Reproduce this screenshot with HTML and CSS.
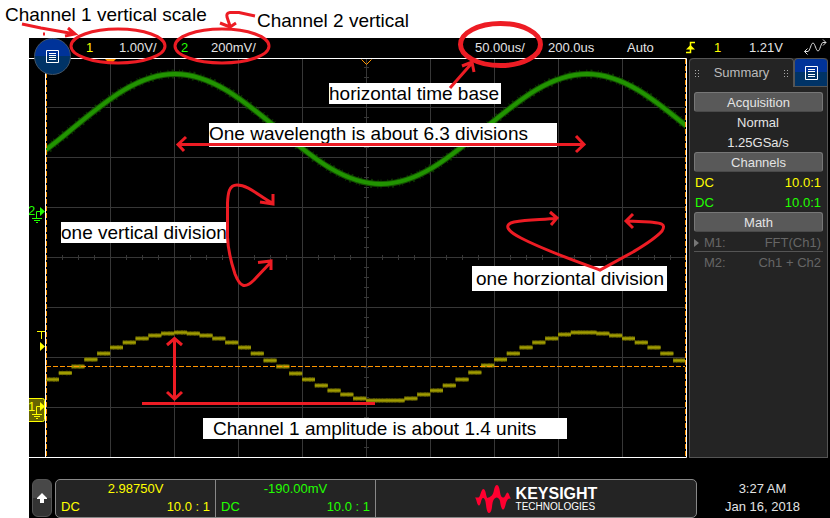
FILE: index.html
```html
<!DOCTYPE html>
<html lang="en">
<head>
<meta charset="utf-8">
<title>Oscilloscope measurement</title>
<link rel="stylesheet" href="styles.css">
</head>
<body>
<div class="page">
  <main class="scope">
    <header class="status">
      <span class="ch1">1</span>
      <span>1.00V/</span>
      <span class="ch2">2</span>
      <span>200mV/</span>
      <span>50.00us/</span>
      <span>200.0us</span>
      <span>Auto</span>
      <svg class="status-icon" width="10" height="20" viewBox="0 0 10 20" fill="none" stroke="#ff0" stroke-width="1.5"><path d="M0 14.500H4.500V4.500H9"/><path d="M0 11.500L4.500 7L9 11.500Z" fill="#ff0" stroke="none"/></svg>
      <span class="ch1">1</span>
      <span>1.21V</span>
      <svg class="status-icon" width="23" height="20" viewBox="0 0 23 20" fill="none" stroke="#ddd"><path d="M0.500 13.500H4C6 13 7 5 9 5S12 13 14 13S17 4.500 19 4.500H22M3.500 10.500L0.500 13.500L3.500 16.500M19 1.500L22 4.500L19 7.500"/></svg>
    </header>

    <div class="workspace">
      <svg class="plot" viewBox="0 0 658 400" role="img" aria-label="Two channel waveform display">
        <g class="grid">
          <path d="M81.500 1V399M145.500 1V399M209.500 1V399M273.500 1V399M337.500 1V399M401.500 1V399M465.500 1V399M529.500 1V399M593.500 1V399"/>
          <path d="M17 49.500H656M17 99.500H656M17 149.500H656M17 199.500H656M17 249.500H656M17 299.500H656M17 349.500H656"/>
          <path class="ticks-x" d="M33 199.500H656"/>
          <path class="ticks-y" d="M337.500 9V399"/>
        </g>
        <svg x="17" y="0" width="639" height="400" viewBox="1 0 639 400">
          <g class="green">
            <path class="fuzz" d="M-76 126C-39 126 -7 99 27 71S93 16 130 16S199 43 233 71S299 126 336 126S405 99 439 71S505 16 542 16S611 43 645 71"/>
            <path class="halo" d="M-76 126C-39 126 -7 99 27 71S93 16 130 16S199 43 233 71S299 126 336 126S405 99 439 71S505 16 542 16S611 43 645 71"/>
            <path class="core" d="M-76 126C-39 126 -7 99 27 71S93 16 130 16S199 43 233 71S299 126 336 126S405 99 439 71S505 16 542 16S611 43 645 71"/>
          </g>
          <defs>
            <path id="steps" transform="translate(1 -57.500)" d="M0 379h13M12.800 372.500h13M25.600 366h13M38.400 359h13M51.200 353h13M64 347h13M76.800 342h13M89.600 338h13M102.400 335h13M115.200 333h13M128 332h13M140.800 333h13M153.600 335h13M166.400 338h13M179.200 342h13M192 347h13M204.800 353h13M217.600 360h13M230.400 366h13M243.200 373h13M256 379h13M268.800 385h13M281.600 390h13M294.400 394h13M307.200 398h13M320 400h13M332.800 400h13M345.600 400h13M358.400 398h13M371.200 394h13M384 390h13M396.800 385h13M409.600 379h13M422.400 372h13M435.200 365h13M448 359h13M460.800 353h13M473.600 347h13M486.400 342h13M499.200 338h13M512 334h13M524.800 332h13M537.600 332h13M550.400 333h13M563.200 335h13M576 338h13M588.800 342h13M601.600 347h13M614.400 353h13M627.200 360h13"/>
          </defs>
          <use href="#steps" class="step-fuzz"/>
          <use href="#steps" class="step-halo"/>
          <use href="#steps" class="step-core"/>
        </svg>
        <path class="trigger" d="M17 308.500H656"/>
        <path class="frame" d="M0 0.500H657.500V399.500H0M16.500 0V399"/>
        <path class="trigger" d="M17.500 1V399M656.500 1V399"/>
        <path fill="#ff9500" d="M76 1H87L84 4H79Z"/>
        <path fill="none" stroke="#ff9500" d="M332.500 1.500L337.500 6.500L342.500 1.500"/>
        <g class="mark2">
          <text x="-1" y="157">2</text>
          <path d="M7.500 160V153.500H12M3 160.500H13M5 162.500H11M7 164.500H9"/>
          <path class="solid" d="M11 149L16 153.500L11 158Z"/>
        </g>
        <g class="mark1">
          <path d="M8 273.500H16M12.500 273V281"/>
          <path class="solid" d="M11 284L16 288.500L11 293Z"/>
          <rect class="badge" x="-2.500" y="340.500" width="18" height="23" rx="2"/>
          <text x="-1" y="353">1</text>
          <path d="M7.500 356V348.500H12M3 356.500H13M5 358.500H11M7 360.500H9"/>
          <path class="solid" d="M11 344L16 348.500L11 353Z"/>
        </g>
      </svg>

      <aside class="side">
        <div class="tabs">
          <div class="tab"><i class="grip"></i><span>Summary</span><i class="grip"></i></div>
          <button class="tab-menu" aria-label="Panel menu">
            <svg width="13" height="14" viewBox="0 0 13 14" fill="none" stroke="#fff"><path d="M0.500 0.500H12.500V13.500H0.500ZM3 3.500H10M3 5.500H10M3 8.500H10M3 10.500H10"/></svg>
          </button>
        </div>
        <div class="readouts">
          <h2>Acquisition</h2>
          <p class="center">Normal</p>
          <p class="center">1.25GSa/s</p>
          <h2>Channels</h2>
          <p class="ch1"><span>DC</span><span>10.0:1</span></p>
          <p class="ch2"><span>DC</span><span>10.0:1</span></p>
          <h2>Math</h2>
          <p class="off first"><span><i class="caret"></i>M1:</span><span>FFT(Ch1)</span></p>
          <p class="off"><span><i class="caret blank"></i>M2:</span><span>Ch1 + Ch2</span></p>
        </div>
      </aside>
      <button class="menu" aria-label="Main menu">
        <svg width="13" height="13" viewBox="0 0 13 13" fill="none" stroke="#fff"><path d="M0.500 0.500H12.500V12.500H0.500ZM3 3.500H10M3 5.500H10M3 7.500H10M3 9.500H10"/></svg>
      </button>
    </div>

    <footer class="bottom">
      <button class="up" aria-label="Expand">
        <svg width="10" height="10" viewBox="0 0 10 10"><path fill="#fff" d="M5 0L10 5V6H7V10H3V6H0V5Z"/></svg>
      </button>
      <div class="bar">
        <section class="cell ch1"><div class="value">2.98750V</div><div class="row"><span>DC</span><span>10.0 : 1</span></div></section>
        <section class="cell ch2"><div class="value">-190.00mV</div><div class="row"><span>DC</span><span>10.0 : 1</span></div></section>
        <section class="brand">
          <svg width="36" height="28" viewBox="0 0 36 28"><path fill="#ff0030" d="M0 12.500H3.500C5.500 12 6 4 8.500 4S11 13 12.500 13C15 12 18 11 19 5C19.500 2 20.500 0 22 0S24.500 3 25 7C25.500 11 27 13 28.500 12.500C30.500 12 31 7.500 32.500 7.500S34.500 12 36 13.500C33 13 32 15 31 18C30 22 29.500 24.500 28 24.500S25.500 20 25 16C24.500 14 23 12.500 21.500 12.500C18 13 17.500 18 17 22C16.500 26 15.500 28 14 28S11.500 25 11 20C10.500 15 9.500 13 8 13C6 13 6 20.500 4 20.500S2 15 0 12.500Z"/></svg>
          <div class="brand-text"><strong>KEYSIGHT</strong><small>TECHNOLOGIES</small></div>
        </section>
      </div>
      <div class="clock"><time>3:27 AM</time><time>Jan 16, 2018</time></div>
    </footer>
  </main>

  <div class="notes">
    <span class="note n-ch1">Channel 1 vertical scale</span>
    <span class="note n-ch2">Channel 2 vertical</span>
    <span class="note boxed n-time">horizontal time base</span>
    <span class="note boxed n-wave">One wavelength is about 6.3 divisions</span>
    <span class="note boxed n-vdiv">one vertical division</span>
    <span class="note boxed n-hdiv">one horziontal division</span>
    <span class="note boxed n-amp">Channel 1 amplitude is about 1.4 units</span>
    <svg class="ink" width="830" height="518" viewBox="0 0 830 518" aria-hidden="true">
      <ellipse cx="118" cy="46" rx="47" ry="17"/>
      <ellipse cx="222" cy="46" rx="47" ry="17"/>
      <ellipse class="heavy" cx="500.500" cy="44.500" rx="40" ry="21"/>
      <path class="fine" d="M22 24L41 28L75 34M68 28L75 34L65 36M43 34h2"/>
      <path class="fine" d="M255 16L239 12.500H230Q226 13 227 17L230 26M220 23L230 27L236 23"/>
      <path class="fine" d="M450 88L472 63M462 66L472 62L474 72"/>
      <path d="M178 144.500H584M186 137L178 144.500L184 151M576 136L584 144.500L576 152"/>
      <path class="fine" d="M272 203C258 195 248 185 237 185C229 185 228 193 227.500 203V237C228 250 231 262 235 274C240 287 245 289 254 280L271 262M273 194V204L260 202M258 262.500L271 261V270"/>
      <path class="fine" d="M557 218C545 220 530 219 514 222C502 225 509 232 521 238C544 250 575 261 600 270L633 252C643 246 655 239 662 231C667 223 659 223 650 222L627 221M550 212L557 218L551 225M633 214L626 221L633 228"/>
      <path d="M174.500 339V399M167 345L174.500 338.500L182 345M167 392L174.500 399L182 392M142 403.500H375"/>
    </svg>
  </div>
</div>
</body>
</html>
```
FILE: styles.css
```css
* { box-sizing: border-box; }

body {
  margin: 0;
  background: #fff;
  font-family: "Liberation Sans", Arial, sans-serif;
  font-size: 13px;
  line-height: 20px;
}

button { padding: 0; border: 0; font: inherit; }
h2, p { margin: 0; font-size: 13px; font-weight: normal; }

.page {
  position: relative;
  display: flex;
  min-height: 100vh;
  padding: 38px 0 0 29px;
}

.scope {
  flex: 1;
  display: flex;
  flex-direction: column;
  min-width: 0;
  background: #000;
  color: #e4e4e4;
}

.ch1 { color: #ff0; }
.ch2 { color: #2f0; }

.status {
  display: grid;
  grid-template-columns: 33px 62px 30px 1fr 73px 79px 59px 28px 35px 55px 26px;
  height: 20px;
  padding-left: 57px;
}

.status-icon { display: block; }

.workspace {
  position: relative;
  flex: 1;
  display: flex;
  gap: 2px;
  padding-right: 2px;
}

.plot { flex: 1; min-width: 0; display: block; }
.grid path { stroke: #373737; fill: none; }
.grid .ticks-x { stroke-width: 5; stroke-dasharray: 1 15; }
.grid .ticks-y { stroke-width: 5; stroke-dasharray: 1 9; }
.frame { stroke: #fff; fill: none; }
.trigger { stroke: #ff9500; stroke-dasharray: 5 2; fill: none; }

.green path { fill: none; }
.green .fuzz { stroke: #0b3000; stroke-width: 9; stroke-dasharray: 1 3 2 5 1 2 1 6; }
.green .halo { stroke: #145600; stroke-width: 6; }
.green .core { stroke: #219400; stroke-width: 4; }

.step-fuzz { stroke: #2f2d00; stroke-width: 5; stroke-dasharray: 1 2 1 3 2 1; }
.step-halo { stroke: #706d00; stroke-width: 4; }
.step-core { stroke: #a09c00; stroke-width: 2; }

.mark1 path, .mark2 path { fill: none; }
.mark1 path { stroke: #ff0; }
.mark2 path { stroke: #2f0; }
.mark1 text, .mark1 .solid { fill: #ff0; stroke: none; }
.mark2 text, .mark2 .solid { fill: #2f0; stroke: none; }
.badge { fill: #666400; stroke: #ff0; }

.side {
  display: flex;
  flex-direction: column;
  width: 139px;
  background: #242424;
  border: 1px solid #555;
  border-top: 0;
  border-radius: 4px 4px 0 0;
}

.tabs { display: flex; height: 29px; }

.tab {
  flex: 1;
  display: flex;
  align-items: center;
  justify-content: space-between;
  padding: 0 4px;
  border: 1px solid #555;
  border-width: 1px 1px 0 0;
  border-radius: 4px 4px 0 0;
  color: #bbb;
}

.grip {
  width: 6px;
  height: 9px;
  background: radial-gradient(circle, #aaa 1px, transparent 1px) 0 0 / 3px 3px;
}

.tab-menu {
  display: grid;
  place-items: center;
  width: 33px;
  background: linear-gradient(#039 50%, #036 50%);
  border: 1px solid #555;
  border-right: 0;
  border-radius: 4px 4px 0 0;
}

.readouts { padding: 5px 4px; }

.readouts h2 {
  height: 20px;
  line-height: 19px;
  text-align: center;
  background: #595959;
  border: 1px solid #777;
  border-bottom-color: #4a4a4a;
  border-radius: 3px;
}

.readouts p {
  display: flex;
  justify-content: space-between;
  height: 20px;
  padding: 0 2px 0 1px;
  line-height: 21px;
}
.readouts .center { justify-content: center; }
.readouts .off { color: #666; padding-left: 0; }
.readouts .first { border-bottom: 1px solid #555; }

.caret {
  display: inline-block;
  margin-right: 5px;
  border: 4px solid transparent;
  border-left: 5px solid #777;
  border-right: 0;
}

.caret.blank { border-left-color: transparent; }

.menu {
  position: absolute;
  left: 5px;
  top: -20px;
  display: grid;
  place-items: center;
  width: 37px;
  height: 37px;
  border: 1px solid #456;
  border-radius: 50%;
  background: linear-gradient(#039 50%, #036 50%);
}

.bottom {
  display: flex;
  height: 60px;
  padding: 21px 2px 0 3px;
  line-height: 18px;
}

.up {
  display: grid;
  place-items: center;
  width: 20px;
  height: 38px;
  margin-right: 3px;
  background: linear-gradient(#484848 50%, #333 50%);
  border: 1px solid #555;
  border-radius: 6px;
}

.bar {
  flex: 1;
  display: flex;
  background: #242424;
  border: 1px solid #888;
  border-radius: 5px;
}

.cell { width: 160px; padding: 0 5px; border-right: 1px solid #888; }
.value { text-align: center; }
.row { display: flex; justify-content: space-between; }

.brand {
  flex: 1;
  display: flex;
  align-items: center;
  justify-content: center;
  gap: 5px;
  color: #fff;
}

.brand-text { display: flex; flex-direction: column; }
.brand strong { font-size: 16px; line-height: 16px; }
.brand small { font-size: 10px; line-height: 10px; }

.clock { display: flex; flex-direction: column; width: 131px; padding-top: 1px; text-align: center; }

.notes { position: absolute; inset: 0; pointer-events: none; color: #000; }
.note { position: absolute; font-size: 19px; line-height: 22px; height: 21px; white-space: nowrap; }
.boxed { background: #fff; }
.n-ch1 { left: 5px; top: 4px; }
.n-ch2 { left: 257px; top: 10px; }
.n-time { left: 329px; top: 83px; width: 172px; }
.n-wave { left: 209px; top: 123px; width: 348px; height: 24px; }
.n-vdiv { left: 61px; top: 222px; width: 166px; }
.n-hdiv { left: 472px; top: 266px; width: 195px; padding: 2px 4px; height: 25px; }
.n-amp { left: 203px; top: 418px; width: 364px; padding-left: 10px; }

.ink {
  position: absolute;
  left: 0;
  top: 0;
  fill: none;
  stroke: #ed1c24;
  stroke-width: 3;
}

.ink .fine { stroke-width: 3; }
.ink .heavy { stroke-width: 5; }
```
